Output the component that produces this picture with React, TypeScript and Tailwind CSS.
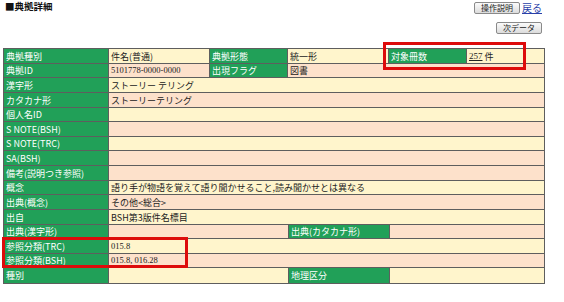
import React from "react";

const jp = { fontFamily: '"MS PGothic", "Noto Sans CJK JP", sans-serif' };
const serif = { fontFamily: '"Liberation Serif", "Noto Sans CJK JP", serif' };

type Row = {
  label: string;
  value?: string;
  h: string;
  bg: string;
  extra?: "top" | "id" | "shutten" | "chiri";
  serifValue?: boolean;
};

const Y = "bg-[#fff5cc]";
const P = "bg-[#fde1cb]";

const rows: Row[] = [
  { label: "典拠種別", value: "件名(普通)", h: "h-[15px]", bg: Y, extra: "top" },
  { label: "典拠ID", value: "5101778-0000-0000", h: "h-[14px]", bg: P, extra: "id", serifValue: true },
  { label: "漢字形", value: "ストーリー テリング", h: "h-[15px]", bg: Y },
  { label: "カタカナ形", value: "ストーリーテリング", h: "h-[15px]", bg: P },
  { label: "個人名ID", h: "h-[14px]", bg: Y },
  { label: "S NOTE(BSH)", h: "h-[15px]", bg: P },
  { label: "S NOTE(TRC)", h: "h-[14px]", bg: Y },
  { label: "SA(BSH)", h: "h-[15px]", bg: P },
  { label: "備考(説明つき参照)", h: "h-[15px]", bg: P },
  { label: "概念", value: "語り手が物語を覚えて語り聞かせること,読み聞かせとは異なる", h: "h-[14px]", bg: Y },
  { label: "出典(概念)", value: "その他<総合>", h: "h-[15px]", bg: P },
  { label: "出自", value: "BSH第3版件名標目", h: "h-[15px]", bg: Y },
  { label: "出典(漢字形)", h: "h-[14px]", bg: P, extra: "shutten" },
  { label: "参照分類(TRC)", value: "015.8", h: "h-[15px]", bg: Y, serifValue: true },
  { label: "参照分類(BSH)", value: "015.8, 016.28", h: "h-[14px]", bg: P, serifValue: true },
  { label: "種別", h: "h-[15px]", bg: Y, extra: "chiri" },
];

function Label({ text, w }: { text: string; w: string }) {
  return (
    <div
      className={`${w} h-full shrink-0 bg-[#21a058] text-white text-[9px] leading-none flex items-center pl-[2px] border-r border-[#5e5e5e] whitespace-nowrap`}
      style={jp}
    >
      {text}
    </div>
  );
}

function Value({ text, w, isSerif }: { text?: string; w: string; isSerif?: boolean }) {
  return (
    <div
      className={`${w} h-full flex items-center pl-[2px] text-[#222] leading-none whitespace-nowrap border-r border-[#5e5e5e] ${
        isSerif ? "text-[8.5px]" : "text-[9px]"
      }`}
      style={isSerif ? serif : jp}
    >
      {text}
    </div>
  );
}

function TableRow({ r, last }: { r: Row; last: boolean }) {
  return (
    <div className={`flex ${r.h} ${r.bg} ${last ? "" : "border-b border-[#5e5e5e]"}`}>
      <Label text={r.label} w="w-[105px]" />
      {r.extra === "top" && (
        <>
          <Value text={r.value} w="w-[101px] shrink-0" />
          <Label text="典拠形態" w="w-[78px]" />
          <Value text="統一形" w="w-[101px] shrink-0" />
          <Label text="対象冊数" w="w-[78px]" />
          <div className="flex-1 h-full flex items-center pl-[2px] text-[9px] leading-none text-[#222]" style={jp}>
            <span className="underline" style={serif}>257</span>
            <span className="ml-[2px]">件</span>
          </div>
        </>
      )}
      {r.extra === "id" && (
        <>
          <Value text={r.value} w="w-[101px] shrink-0" isSerif />
          <Label text="出現フラグ" w="w-[78px]" />
          <div className="flex-1 h-full flex items-center pl-[2px] text-[9px] leading-none text-[#222]" style={jp}>
            図書
          </div>
        </>
      )}
      {(r.extra === "shutten" || r.extra === "chiri") && (
        <>
          <Value text={r.value} w="w-[180px] shrink-0" />
          <Label text={r.extra === "shutten" ? "出典(カタカナ形)" : "地理区分"} w="w-[101px]" />
          <div className="flex-1 h-full" />
        </>
      )}
      {!r.extra && (
        <div
          className={`flex-1 h-full flex items-center pl-[2px] leading-none text-[#222] whitespace-nowrap ${
            r.serifValue ? "text-[8.5px]" : "text-[9px]"
          }`}
          style={r.serifValue ? serif : jp}
        >
          {r.value}
        </div>
      )}
    </div>
  );
}

function Btn({ children }: { children: React.ReactNode }) {
  return (
    <button
      className="h-[12px] px-[6px] rounded-[2px] border border-[#8a8a8a] bg-gradient-to-b from-[#fbfbfb] to-[#dcdcdc] text-[8px] leading-none text-[#222] flex items-center"
      style={jp}
    >
      {children}
    </button>
  );
}

export default function App() {
  return (
    <div className="w-[564px] h-[302px] bg-white relative overflow-hidden">
      {/* header */}
      <div className="flex justify-between h-[47px]">
        <div className="pl-[5px] pt-[2px] text-[9.5px] font-bold text-[#111] leading-none" style={jp}>
          ■典拠詳細
        </div>
        <div className="flex flex-col items-end pr-[22px] pt-[2px] gap-[8px]">
          <div className="flex items-center gap-[2px]">
            <Btn>操作説明</Btn>
            <span className="text-[10px] leading-none text-[#2a3fa8] underline" style={jp}>
              戻る
            </span>
          </div>
          <div>
            <Btn>次データ</Btn>
          </div>
        </div>
      </div>

      {/* table */}
      <div className="ml-[3px] w-[542px] border border-[#5e5e5e] mt-[1px]">
        {rows.map((r, i) => (
          <TableRow key={i} r={r} last={i === rows.length - 1} />
        ))}
      </div>

      {/* highlight boxes */}
      <div className="absolute left-[383px] top-[42px] w-[143px] h-[28px] border-[3px] border-[#dd0b0b]" />
      <div className="absolute left-[2px] top-[237px] w-[186px] h-[31px] border-[3px] border-[#dd0b0b]" />
    </div>
  );
}
